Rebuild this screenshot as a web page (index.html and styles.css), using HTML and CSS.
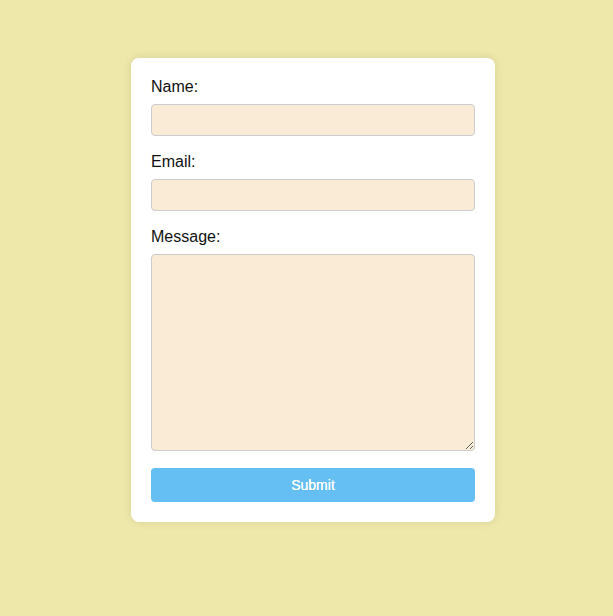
FILE: index.html
```html
<!DOCTYPE html>
<html lang="en">
<head>
<meta charset="utf-8">
<title>Contact form</title>
<link rel="stylesheet" href="styles.css">
</head>
<body>
<form class="card">
  <label class="label" for="name">Name:</label>
  <input class="field" id="name" type="text">
  <label class="label" for="email">Email:</label>
  <input class="field" id="email" type="email">
  <label class="label" for="message">Message:</label>
  <textarea class="field area" id="message"></textarea>
  <button class="submit" type="button">Submit</button>
</form>
</body>
</html>
```
FILE: styles.css
```css
html, body {
  margin: 0;
  padding: 0;
}
body {
  background: #eee8aa;
  font-family: "Liberation Sans", Arial, sans-serif;
  min-height: 616px;
}
.card {
  display: flex;
  flex-direction: column;
  width: 364px;
  box-sizing: border-box;
  margin: 58px 0 0 131px;
  padding: 20px;
  background: #ffffff;
  border-radius: 8px;
  box-shadow: 0 0 10px rgba(0, 0, 0, 0.1);
}
.label {
  font-size: 16px;
  color: #111;
  margin-bottom: 8px;
}
.field {
  box-sizing: border-box;
  width: 100%;
  height: 32px;
  margin: 0 0 17px 0;
  padding: 6px 8px;
  border: 1px solid #cccccc;
  border-radius: 4px;
  background: #faebd7;
  font-family: inherit;
  font-size: 14px;
}
.area {
  height: 197px;
  margin-bottom: 17px;
  resize: vertical;
}
.submit {
  height: 34px;
  border: none;
  border-radius: 4px;
  background: #66bff3;
  color: #ffffff;
  font-family: inherit;
  font-size: 14px;
  font-weight: 500;
  text-shadow: 0 0 0.3px #ffffff;
  cursor: pointer;
}
```
